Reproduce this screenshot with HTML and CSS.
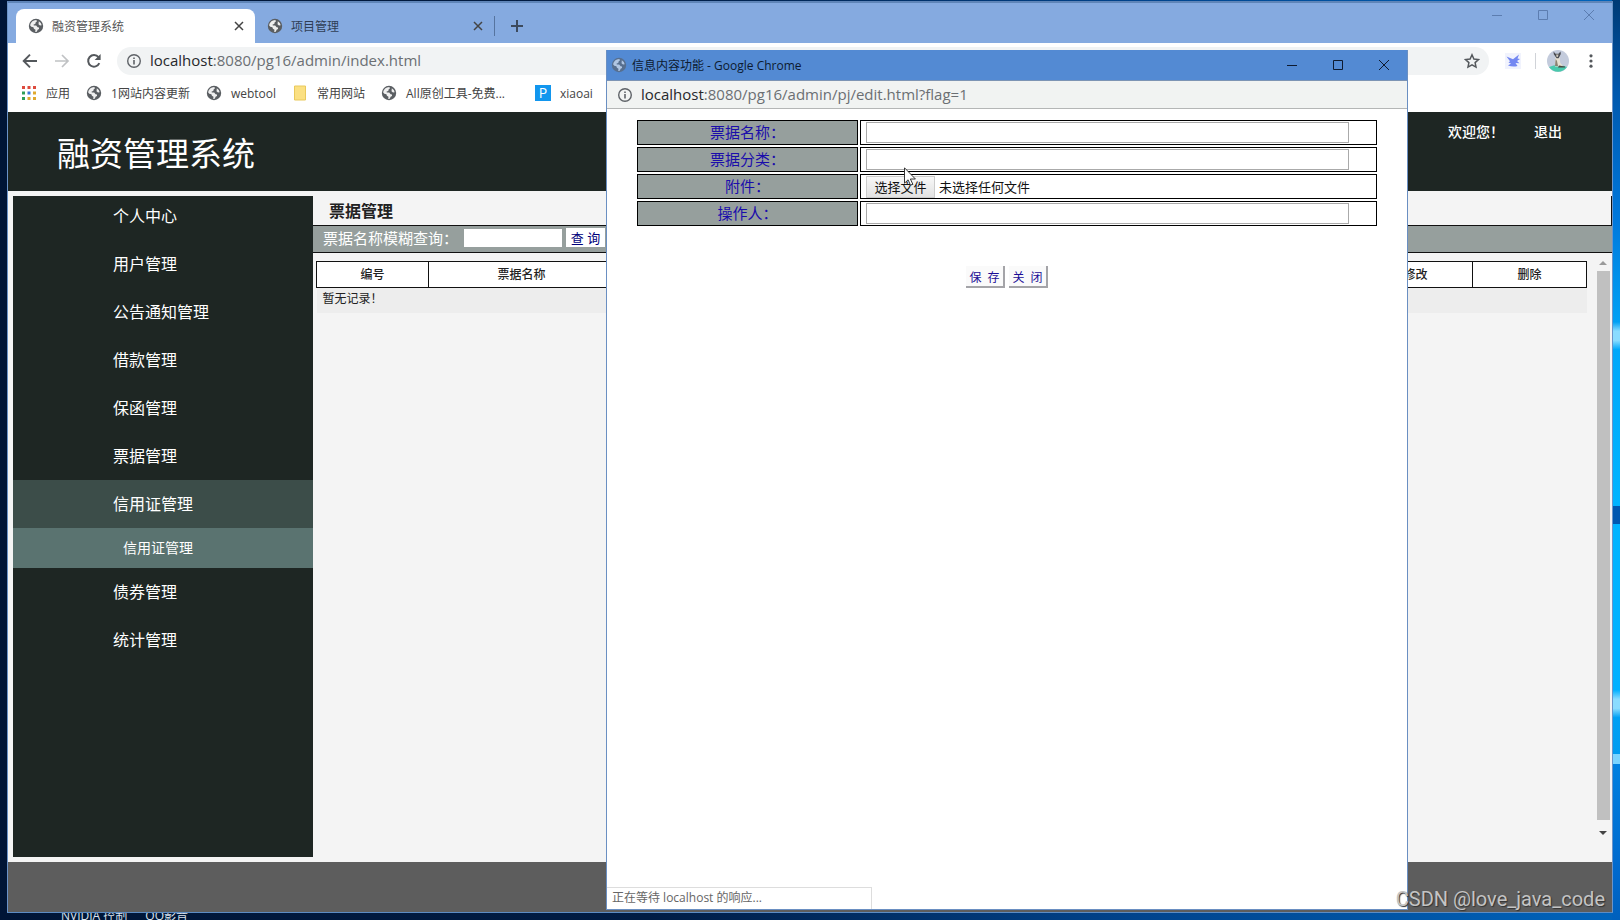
FILE: index.html
```html
<!DOCTYPE html>
<html lang="zh-CN">
<head>
<meta charset="utf-8">
<title>融资管理系统</title>
<link rel="stylesheet" href="styles.css">
</head>
<body>
<svg class="defs" aria-hidden="true">
  <symbol id="globe" viewBox="0 0 16 16">
    <circle cx="8" cy="8" r="7.2" fill="#5a5e62"/>
    <path d="M2.200 7.500C2.600 4.500 5 2.200 8.300 2.100L9 3.300 7.600 4.600 7.300 6 5.600 6.400 5.800 7.600H8.200L9.600 9.200 11 9.400 11 11 9.600 11.700 8.800 13.700 7.200 13.900 7.500 11.800 5.900 10.700 5.400 9.200 3.300 8.700z" fill="#fff" opacity=".9"/>
    <path d="M10.800 3.200l2 1.800.9 2.200-1.700.3-1.500-1.300.2-1.500z" fill="#fff" opacity=".9"/>
  </symbol>
  <symbol id="info" viewBox="0 0 16 16">
    <circle cx="8" cy="8" r="6.3" fill="none" stroke="#5f6368" stroke-width="1.4"/>
    <path d="M8 7v4.5M8 4.4v1.5" stroke="#5f6368" stroke-width="1.6"/>
  </symbol>
  <symbol id="cross" viewBox="0 0 16 16"><path d="M4 4l8 8M12 4l-8 8" fill="none" stroke="currentColor" stroke-width="1.5"/></symbol>
  <symbol id="min" viewBox="0 0 16 16"><path d="M3 8.5h10" stroke="currentColor"/></symbol>
  <symbol id="max" viewBox="0 0 16 16"><path d="M3.5 3.5h9v9h-9z" fill="none" stroke="currentColor"/></symbol>
  <symbol id="close" viewBox="0 0 16 16"><path d="M3 3l10 10M13 3L3 13" fill="none" stroke="currentColor"/></symbol>
</svg>

<div class="desktop">
  <div class="window">
    <div class="tabstrip">
      <div class="tab tab-active">
        <svg class="ico"><use href="#globe"/></svg><span class="tab-name">融资管理系统</span>
        <button class="tab-x" aria-label="关闭标签"><svg class="ico"><use href="#cross"/></svg></button>
      </div>
      <div class="tab">
        <svg class="ico"><use href="#globe"/></svg><span class="tab-name">项目管理</span>
        <button class="tab-x" aria-label="关闭标签"><svg class="ico"><use href="#cross"/></svg></button>
      </div>
      <button class="tab-new" aria-label="新标签页"><svg class="ico" viewBox="0 0 16 16"><path d="M8 2v12M2 8h12" stroke="#3c4a5e" stroke-width="2"/></svg></button>
      <div class="win-ctl">
        <button aria-label="最小化"><svg class="ico"><use href="#min"/></svg></button>
        <button aria-label="最大化"><svg class="ico"><use href="#max"/></svg></button>
        <button aria-label="关闭"><svg class="ico"><use href="#close"/></svg></button>
      </div>
    </div>

    <div class="toolbar">
      <button aria-label="后退"><svg class="ico" viewBox="0 0 16 16"><path d="M15 8H2.500M8 1.700L1.700 8 8 14.300" fill="none" stroke="#54585c" stroke-width="1.900"/></svg></button>
      <button aria-label="前进"><svg class="ico" viewBox="0 0 16 16"><path d="M1 8h12.500M8 2l6 6-6 6" fill="none" stroke="#c0c2c4" stroke-width="1.700"/></svg></button>
      <button aria-label="刷新"><svg class="ico" viewBox="0 0 16 16"><path d="M13.300 10.200A5.800 5.800 0 1 1 12.500 4.200" fill="none" stroke="#54585c" stroke-width="2"/><path d="M14.600 1v6H8.600z" fill="#54585c"/></svg></button>
      <div class="omnibox">
        <svg class="ico"><use href="#info"/></svg>
        <span class="url"><b>localhost</b>:8080/pg16/admin/index.html</span>
        <svg class="ico star" viewBox="0 0 16 16"><path d="M8 1.800l1.900 4.200 4.600.5-3.400 3.100.9 4.500L8 11.800l-4 2.300.9-4.500L1.500 6.500l4.600-.5z" fill="none" stroke="#54585c" stroke-width="1.500"/></svg>
      </div>
      <svg class="ico bird" viewBox="0 0 16 16"><path d="M1.500 3.500L8 6.300 14 1.500 12.500 5.500 15 6l-3 2 2.500 2.200-4-.2L12.500 13C9 14 6 13.500 3 12.500L6 10.500 3.500 9.500 5 8.300z" fill="#7488f2"/></svg>
      <span class="bar-sep"></span>
      <svg class="avatar" viewBox="0 0 22 22"><circle cx="11" cy="11" r="11" fill="#c3cbdc"/><path d="M2 17q9-4 18 0a11 11 0 0 1-18 0z" fill="#49c9ac"/><path d="M8.500 7h4l.8 6 3.200 3.500H8z" fill="#e6e0d2"/><path d="M8.700 9l-.7 7h3l-1-5z" fill="#8b8170"/><path d="M6.500 1.500l2 2.300h3l2-2.300.3 2.500-2.200 4.200h-2L6.800 4.200z" fill="#4a4c52"/><path d="M9 4.500h2.500l-.6 2.500H9.600z" fill="#c9c4b8"/><path d="M12 15.500l6 1v1h-7z" fill="#4b4a44"/></svg>
      <button class="dots" aria-label="菜单"><svg class="ico" viewBox="0 0 16 16" fill="#54585c"><circle cx="8" cy="2.800" r="1.600"/><circle cx="8" cy="8" r="1.600"/><circle cx="8" cy="13.200" r="1.600"/></svg></button>
    </div>

    <div class="bookmarks">
      <a href="#"><svg class="ico" viewBox="0 0 16 16"><path d="M1 1h3v3H1zM6.500 1h3v3h-3zM12 1h3v3h-3z" fill="#dd4b3e"/><path d="M1 6.500h3v3H1z" fill="#2f9e57"/><path d="M6.500 6.500h3v3h-3z" fill="#3b78d8"/><path d="M12 6.500h3v3h-3zM6.500 12h3v3h-3zM12 12h3v3h-3z" fill="#e0a92e"/><path d="M1 12h3v3H1z" fill="#2f9e57"/></svg>应用</a>
      <a href="#"><svg class="ico"><use href="#globe"/></svg>1网站内容更新</a>
      <a href="#"><svg class="ico"><use href="#globe"/></svg>webtool</a>
      <a href="#"><svg class="ico" viewBox="0 0 16 16"><path d="M2.500 1h11v14h-11z" fill="#fbe082" stroke="#e9c95c"/></svg>常用网站</a>
      <a href="#"><svg class="ico"><use href="#globe"/></svg>All原创工具-免费...</a>
      <a href="#" class="last"><span class="p-ico">P</span>xiaoai</a>
    </div>

    <header class="app-head">
      <h1>融资管理系统</h1>
      <nav><span>欢迎您！</span><a href="#">退出</a></nav>
    </header>

    <div class="app-body">
      <aside class="side">
        <ul>
          <li><a href="#">个人中心</a></li>
          <li><a href="#">用户管理</a></li>
          <li><a href="#">公告通知管理</a></li>
          <li><a href="#">借款管理</a></li>
          <li><a href="#">保函管理</a></li>
          <li><a href="#">票据管理</a></li>
          <li><a href="#" class="open">信用证管理</a><a href="#" class="sub">信用证管理</a></li>
          <li><a href="#">债券管理</a></li>
          <li><a href="#">统计管理</a></li>
        </ul>
      </aside>
      <main class="main">
        <h2>票据管理</h2>
        <form class="search">
          <label for="q">票据名称模糊查询：</label><input id="q" type="text"><button type="button">查 询</button>
        </form>
        <div class="scroll">
          <table class="list">
            <colgroup><col class="c-no"><col class="c-name"><col><col class="c-act"><col class="c-act"></colgroup>
            <thead><tr><th>编号</th><th>票据名称</th><th></th><th>修改</th><th>删除</th></tr></thead>
            <tbody><tr><td colspan="5">暂无记录！</td></tr></tbody>
          </table>
          <div class="bar">
            <svg viewBox="0 0 8 4"><path d="M0 4l4-4 4 4z" fill="#9a9a9a"/></svg>
            <span class="thumb"></span>
            <svg viewBox="0 0 8 4"><path d="M0 0l4 4 4-4z" fill="#444"/></svg>
          </div>
        </div>
      </main>
    </div>
    <footer class="app-foot"></footer>
  </div>

  <div class="task"><span>NVIDIA 控制</span><span>QQ影音</span></div>

  <section class="popup">
    <div class="pop-title">
      <svg class="ico dim"><use href="#globe"/></svg><span>信息内容功能 - Google Chrome</span>
      <div class="win-ctl">
        <button aria-label="最小化"><svg class="ico"><use href="#min"/></svg></button>
        <button aria-label="最大化"><svg class="ico"><use href="#max"/></svg></button>
        <button aria-label="关闭"><svg class="ico"><use href="#close"/></svg></button>
      </div>
    </div>
    <div class="pop-url"><svg class="ico"><use href="#info"/></svg><span class="url"><b>localhost</b>:8080/pg16/admin/pj/edit.html?flag=1</span></div>
    <form class="pop-body">
      <table class="edit">
        <tr><th><label for="f1">票据名称：</label></th><td><input id="f1" type="text"></td></tr>
        <tr><th><label for="f2">票据分类：</label></th><td><input id="f2" type="text"></td></tr>
        <tr><th><label for="f3">附件：</label></th><td><div class="file"><input id="f3" type="file"><label for="f3" class="file-btn">选择文件</label><span>未选择任何文件</span></div></td></tr>
        <tr><th><label for="f4">操作人：</label></th><td><input id="f4" type="text"></td></tr>
      </table>
      <div class="acts"><button type="button">保&nbsp; 存</button><button type="button">关&nbsp; 闭</button></div>
    </form>
    <div class="status">正在等待 localhost 的响应...</div>
  </section>

  <svg class="cursor" viewBox="0 0 12 19"><path d="M.5.8v15.400l3.600-3.400 2.400 5.400 2.300-1-2.400-5.200h5z" fill="#fff" stroke="#222" stroke-width=".9"/></svg>
  <div class="mark">CSDN @love_java_code</div>
</div>
</body>
</html>
```
FILE: styles.css
```css
* { box-sizing: border-box; }
body { margin: 0; font: 12px "Open Sans", "Noto Sans CJK SC", sans-serif; color: #222; }
button { border: 0; padding: 0; background: none; font: inherit; color: inherit; display: flex; align-items: center; justify-content: center; }
a { color: inherit; text-decoration: none; }
h1, h2, ul { margin: 0; padding: 0; list-style: none; }
.defs { display: none; }
.ico { width: 16px; height: 16px; flex: none; display: block; }

.desktop {
  position: relative; height: 100vh; overflow: hidden; padding: 1px 7px 0;
  display: flex; flex-direction: column;
  background:
    linear-gradient(#003a75 0, #0058ad 10%, #0078dc 24%, #0090ea 30%, #00a0f4 35%, #8adcff 36%, #8adcff 37%, #00a8fa 38%, #00b4ff 55%, #0058b0 55%, #0058b0 57%, #00b4ff 57%, #00b0ff 75%, #8adcff 76%, #8adcff 77%, #00a0f4 78%, #009cf0 82%, #7ad4ff 82%, #7ad4ff 83%, #0080e0 83%, #0068cc 95%, #0060bc 100%) right / 8px 100% no-repeat,
    linear-gradient(90deg, #001536, #001c44 40%, #00438c 70%, #0064bc);
}
.window { flex: 1; display: flex; flex-direction: column; border: 1px solid #6b93c8; border-top: 2px solid #5f85b8; border-bottom-color: #5c8cc4; background: #fff; min-height: 0; }

.tabstrip { height: 40px; background: #85aae0; display: flex; align-items: flex-end; padding-left: 8px; }
.tab { width: 239px; height: 34px; display: flex; align-items: center; padding: 0 8px 0 12px; color: #2f3e55; gap: 8px; }
.tab-active { background: #fff; border-radius: 8px 8px 0 0; color: #555; }
.tab-name { flex: 1; }
.tab-x { color: #444; }
.tab-new { width: 45px; height: 20px; border-left: 1px solid #56749f; margin-bottom: 7px; }
.win-ctl { margin-left: auto; display: flex; align-self: stretch; }
.win-ctl button { width: 46px; }
.tabstrip .win-ctl { color: #5c7db0; align-items: flex-start; padding-top: 4px; }

.toolbar { height: 36px; display: flex; align-items: center; padding-left: 14px; gap: 16px; }
.omnibox { flex: 1; height: 28px; margin-left: -1px; border-radius: 14px; background: #f1f3f4; display: flex; align-items: center; gap: 8px; padding: 0 9px; }
.url { font-size: 15px; line-height: 18px; padding-bottom: 2px; color: #6b6f73; }
.url b { font-weight: 400; color: #26282b; }
.star { margin-left: auto; }
.bird { background: #f1f3fd; margin-right: -2px; }
.bar-sep { width: 1px; height: 16px; background: #d0d3d8; margin-right: -5px; }
.avatar { width: 22px; height: 22px; }
.dots { margin: 0 13px 0 -2px; }

.bookmarks { height: 33px; display: flex; align-items: center; padding: 0 0 5px 13px; gap: 16px; color: #444; white-space: nowrap; }
.bookmarks a { display: flex; align-items: center; gap: 9px; }
.bookmarks .last { margin-left: 14px; }
.p-ico { width: 16px; height: 16px; background: #1296ee; color: #fff; font-size: 14px; line-height: 16px; text-align: center; }

.app-head { height: 79px; background: #1e2623; color: #fff; display: flex; justify-content: space-between; padding: 0 50px 0 49px; }
.app-head h1 { font-size: 33px; font-weight: 400; line-height: 84px; }
.app-head nav { display: flex; gap: 30px; font-size: 14px; font-weight: 500; line-height: 40px; }

.app-body { flex: 1; display: flex; background: #f4f4f4; padding: 5px 0 5px 5px; min-height: 0; }
.side { width: 300px; background: #1e2623; color: #fff; overflow: hidden; flex: none; }
.side ul { margin-top: -4px; }
.side a { display: block; padding-left: 100px; font-size: 16px; line-height: 48px; }
.side .open { background: #3c4d49; }
.side .sub { background: #5a7370; font-size: 14px; line-height: 40px; padding-left: 110px; }

.main { flex: 1; display: flex; flex-direction: column; min-width: 0; }
.main h2 { height: 30px; line-height: 30px; padding-left: 16px; font-size: 16px; font-weight: 700; border-bottom: 1px solid #111; border-right: 1px solid #111; }
.search { height: 27px; background: #969f9d; border-bottom: 1px solid #111; display: flex; align-items: center; padding: 0 0 3px 10px; font-size: 15px; color: #fff; }
.search label { width: 141px; }
.search input { width: 98px; height: 18px; border: 0; padding: 0; background: #fff; }
.search button { width: 39px; height: 19px; margin-left: 4px; background: #fff; color: #00007a; font-size: 13px; }
.scroll { flex: 1; display: flex; justify-content: space-between; padding: 8px 2px 22px 3px; }
.list { width: 1271px; flex: 0 1 auto; align-self: flex-start; border-collapse: collapse; table-layout: fixed; font-size: 12px; }
.list .c-no { width: 112px; }
.list .c-name { width: 186px; }
.list .c-act { width: 114px; }
.list th { height: 26px; padding: 0; border: 1px solid #111; background: #fff; font-weight: 500; line-height: 18px; }
.list td { height: 25px; padding: 0 6px 2px; background: #ededed; line-height: 18px; }
.bar { width: 14px; display: flex; flex-direction: column; align-items: center; gap: 6px; }
.bar svg { width: 8px; height: 4px; flex: none; }
.bar .thumb { flex: 1; width: 13px; background: #c0c0c0; }
.bar .thumb + svg { margin-top: 5px; }
.app-foot { height: 50px; background: #5d5d5d; }

.task { height: 7px; overflow: hidden; display: flex; gap: 18px; padding-left: 54px; color: #dde4ee; line-height: 5px; }

.popup { position: absolute; left: 606px; right: 212px; top: 50px; bottom: 10px; border: 1px solid #6a8fc2; border-top: 0; background: #fff; display: flex; flex-direction: column; }
.pop-title { height: 31px; background: #538ad3; color: #0d1a30; display: flex; align-items: center; gap: 5px; padding-left: 4px; border-bottom: 1px solid #7d94b4; }
.dim { opacity: .6; }
.pop-url { height: 28px; background: #f1f3f2; border-bottom: 1px solid #b4b6b6; display: flex; align-items: center; gap: 8px; padding-left: 10px; }
.pop-body { flex: 1; padding: 9px 28px; }
.edit { width: 100%; border-spacing: 2px; table-layout: fixed; }
.edit th, .edit td { height: 25px; border: 1px solid #000; padding: 0 7px 0 5px; }
.edit th { width: 221px; padding: 0 5px 2px; background: #969f9d; color: #1a0dab; font-size: 15px; font-weight: 400; line-height: 20px; }
.edit td > input { display: block; width: 96%; height: 21px; border: 1px solid #aaa; padding: 0 2px; }
.file { display: flex; align-items: center; gap: 4px; font-size: 13px; line-height: 20px; color: #111; }
.file input { position: absolute; width: 1px; height: 1px; opacity: 0; }
.file-btn { width: 69px; height: 22px; text-align: center; border: 1px solid #ccc; background: linear-gradient(#f8f8f8, #e2e2e2); }
.acts { display: flex; justify-content: center; gap: 4px; margin-top: 38px; }
.acts button { width: 39px; height: 22px; padding-top: 1px; background: #fafafa; border: solid #a4a4a8; border-width: 0 2px 2px 0; color: #1a0d96; }
.status { width: 265px; height: 22px; border: solid #ddd; border-width: 1px 1px 0 0; padding-left: 5px; line-height: 20px; color: #666; }

.cursor { position: absolute; left: 904px; top: 167px; width: 12px; height: 19px; }
.mark { position: absolute; right: 15px; bottom: 9px; font: 20px/24px Roboto, sans-serif; color: #c4c4c4; text-shadow: 1px 1px 1px #333; }
```
